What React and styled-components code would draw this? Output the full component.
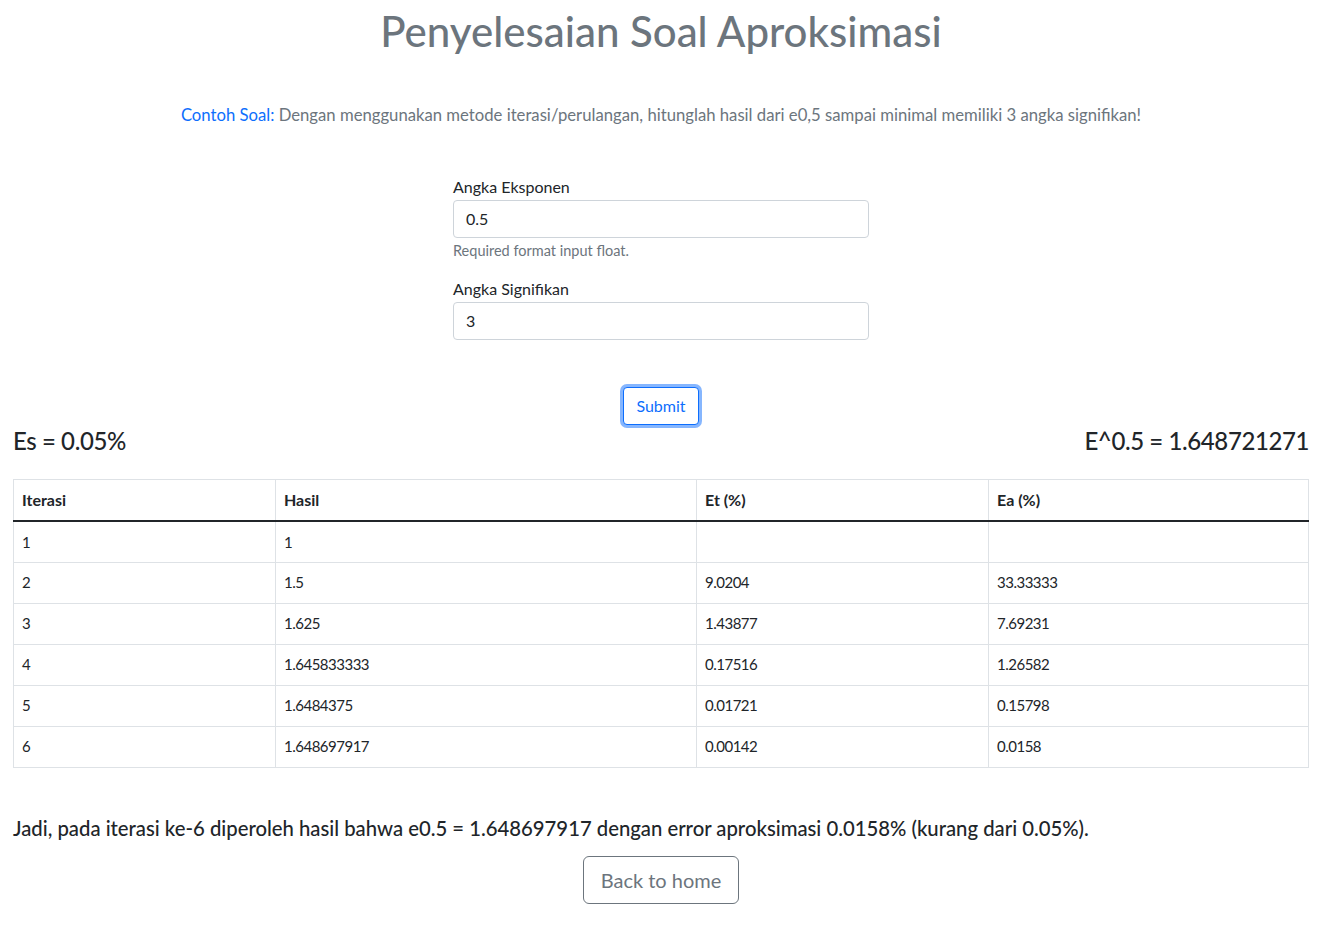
import styled, { createGlobalStyle } from "styled-components";

const GlobalStyle = createGlobalStyle`
body{
  margin: 0;
  background: #fff;
  color: #212529;
  font-family: Lato, "Open Sans", sans-serif;
  font-size: 16px;
  line-height: 1.5;
}
*{ box-sizing: border-box; }
`

const Page = styled.div`
padding: 6px 15px 20px 13px;
`
const Title = styled.h1`
margin: 0;
text-align: center;
font-size: 42px;
font-weight: 500;
line-height: 50px;
color: #6c757d;
`
const Question = styled.p`
margin: 47px 0 0;
text-align: center;
font-size: 16.7px;
color: #6c757d;
`
const Highlight = styled.span`
color: #0d6efd;
`
const Form = styled.form`
width: 416px;
margin: 47px auto 0;
`
const Group = styled.div`
margin-bottom: ${p => p.$last ? "0" : "16px"};
`
const Label = styled.label`
display: block;
margin-bottom: 1px;
`
const Input = styled.input`
display: block;
width: 100%;
height: 38px;
padding: 4px 12px 6px;
font: inherit;
color: #212529;
border: 1px solid #ced4da;
border-radius: 4px;
outline: none;
`
const Help = styled.div`
margin-top: 2px;
font-size: 14.5px;
line-height: 21px;
color: #6c757d;
`
const SubmitRow = styled.div`
display: flex;
justify-content: center;
margin-top: 47px;
`
const SubmitButton = styled.button`
height: 38px;
padding: 6px 12px;
font: inherit;
color: #0d6efd;
background: #fff;
border: 1px solid #0d6efd;
border-radius: 4px;
box-shadow: 0 0 0 3px rgba(13, 110, 253, 0.5);
cursor: pointer;
`
const ResultRow = styled.div`
display: flex;
justify-content: space-between;
align-items: center;
margin-top: 1px;
`
const Result = styled.h4`
margin: 0;
font-size: 24px;
font-weight: 500;
line-height: 29px;
letter-spacing: -0.4px;
`
const Table = styled.table`
width: 100%;
margin-top: 24px;
border-collapse: collapse;
`
const Th = styled.th`
padding: 8px;
text-align: left;
font-weight: 700;
border: 1px solid #dee2e6;
border-bottom: 2px solid #212529;
width: ${p => p.$w};
`
const Td = styled.td`
padding: 8px;
height: 41px;
font-size: 15px;
letter-spacing: -0.5px;
border: 1px solid #dee2e6;
`
const Conclusion = styled.h5`
margin: 48px 0 0;
font-size: 20.3px;
font-weight: 500;
line-height: 24px;
`
const BackRow = styled.div`
display: flex;
justify-content: center;
margin-top: 16px;
`
const BackButton = styled.a`
display: inline-block;
padding: 8px 17px;
font-size: 20px;
line-height: 30px;
color: #6c757d;
border: 1px solid #6c757d;
border-radius: 6px;
text-decoration: none;
`

const rows = [
  ["1", "1", "", ""],
  ["2", "1.5", "9.0204", "33.33333"],
  ["3", "1.625", "1.43877", "7.69231"],
  ["4", "1.645833333", "0.17516", "1.26582"],
  ["5", "1.6484375", "0.01721", "0.15798"],
  ["6", "1.648697917", "0.00142", "0.0158"],
]

const columns = [
  { name: "Iterasi", w: "262px" },
  { name: "Hasil", w: "421px" },
  { name: "Et (%)", w: "292px" },
  { name: "Ea (%)", w: "auto" },
]

const App = () => {
  return (
    <Page>
      <GlobalStyle />
      <Title>Penyelesaian Soal Aproksimasi</Title>
      <Question>
        <Highlight>Contoh Soal:</Highlight> Dengan menggunakan metode iterasi/perulangan, hitunglah hasil dari e0,5 sampai minimal memiliki 3 angka signifikan!
      </Question>
      <Form onSubmit={e => e.preventDefault()}>
        <Group>
          <Label>Angka Eksponen</Label>
          <Input defaultValue="0.5" />
          <Help>Required format input float.</Help>
        </Group>
        <Group $last>
          <Label>Angka Signifikan</Label>
          <Input defaultValue="3" />
        </Group>
      </Form>
      <SubmitRow>
        <SubmitButton type="button">Submit</SubmitButton>
      </SubmitRow>
      <ResultRow>
        <Result>Es = 0.05%</Result>
        <Result>E^0.5 = 1.648721271</Result>
      </ResultRow>
      <Table>
        <thead>
          <tr>
            {columns.map(col => (
              <Th key={col.name} $w={col.w}>{col.name}</Th>
            ))}
          </tr>
        </thead>
        <tbody>
          {rows.map((row, index) => (
            <tr key={index}>
              {row.map((cell, i) => <Td key={i}>{cell}</Td>)}
            </tr>
          ))}
        </tbody>
      </Table>
      <Conclusion>
        Jadi, pada iterasi ke-6 diperoleh hasil bahwa e0.5 = 1.648697917 dengan error aproksimasi 0.0158% (kurang dari 0.05%).
      </Conclusion>
      <BackRow>
        <BackButton href="#">Back to home</BackButton>
      </BackRow>
    </Page>
  );
}

export default App;
